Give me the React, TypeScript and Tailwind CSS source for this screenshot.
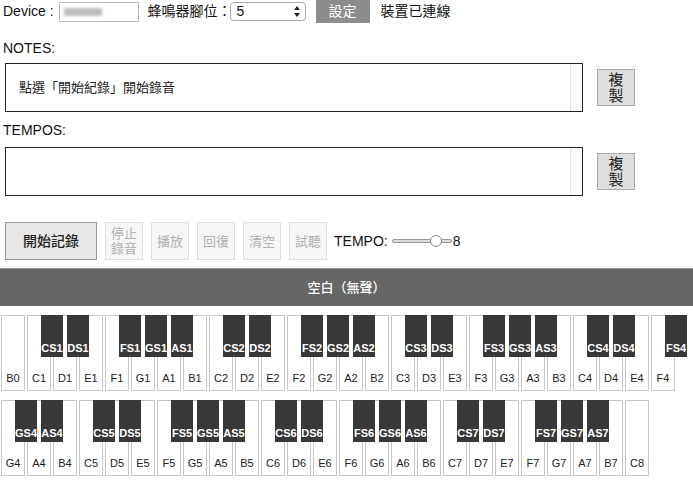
import React from "react";

const FONT = { fontFamily: '"Liberation Sans", "Noto Sans CJK TC", sans-serif' };

const ORDER = ["C", "D", "E", "F", "G", "A", "B"];
const SHARP = new Set(["C", "D", "F", "G", "A"]);

function buildKeys() {
  const keys: { name: string; sharp?: string }[] = [{ name: "B0" }];
  for (let o = 1; o <= 7; o++) {
    for (const n of ORDER) {
      keys.push({ name: `${n}${o}`, sharp: SHARP.has(n) ? `${n}S${o}` : undefined });
    }
  }
  keys.push({ name: "C8" });
  return keys;
}

function CopyButton() {
  return (
    <button
      type="button"
      className="w-[38px] h-[37px] border border-[#aaa] bg-[#dedede] text-[15px] leading-[16px] text-[#222] flex flex-col items-center justify-center"
    >
      <span>複</span>
      <span>製</span>
    </button>
  );
}

function TextBox({ text }: { text?: string }) {
  return (
    <div className="w-[578px] h-[49px] border border-[#222] bg-white flex">
      <div className="flex-1 flex items-center pl-[13px] text-[13px] text-[#222]">{text}</div>
      <div className="w-[12px] border-l border-[#e6e6e6] bg-[#fbfbfb]" />
    </div>
  );
}

function DisabledButton({ lines }: { lines: string[] }) {
  return (
    <button
      type="button"
      disabled
      className="w-[38px] h-[38px] border border-[#ddd] bg-[#f6f6f6] text-[13px] leading-[15px] text-[#b0b0b0] flex flex-col items-center justify-center"
    >
      {lines.map((l) => (
        <span key={l}>{l}</span>
      ))}
    </button>
  );
}

export default function App() {
  const keys = buildKeys();

  return (
    <div className="w-[693px] h-[482px] bg-white overflow-hidden text-[#111]" style={FONT}>
      <div className="h-[23px] flex items-center pl-[3px] text-[14px]">
        <span>Device :</span>
        <div className="ml-[5px] w-[80px] h-[20px] border border-[#bbb] bg-white flex items-center pl-[4px]">
          <div className="w-[38px] h-[8px] bg-[#bdbdbd] blur-[1.5px]" />
        </div>
        <span className="ml-[9px]">蜂鳴器腳位：</span>
        <div className="ml-[-2px] w-[76px] h-[19px] border border-[#aaa] rounded-[4px] bg-white flex items-center justify-between pl-[6px] pr-[5px]">
          <span className="text-[14px]">5</span>
          <svg width="6" height="11" viewBox="0 0 6 11">
            <path d="M3 0 L6 4 L0 4 Z" fill="#222" />
            <path d="M3 11 L6 7 L0 7 Z" fill="#222" />
          </svg>
        </div>
        <button type="button" className="ml-[10px] w-[54px] h-[23px] bg-[#8c8c8c] text-white text-[14px]">
          設定
        </button>
        <span className="ml-[11px]">裝置已連線</span>
      </div>

      <div className="mt-[17px] pl-[3px] text-[14px] leading-[17px]">NOTES:</div>
      <div className="mt-[6px] pl-[5px] flex items-center gap-[14px]">
        <TextBox text="點選「開始紀錄」開始錄音" />
        <CopyButton />
      </div>

      <div className="mt-[10px] pl-[3px] text-[14px] leading-[17px]">TEMPOS:</div>
      <div className="mt-[8px] pl-[5px] flex items-center gap-[14px]">
        <TextBox />
        <CopyButton />
      </div>

      <div className="mt-[26px] pl-[5px] h-[38px] flex items-center gap-[8px]">
        <button
          type="button"
          className="w-[92px] h-[38px] border border-[#999] bg-[#e8e8e8] text-[14px] font-medium text-[#222]"
        >
          開始記錄
        </button>
        <DisabledButton lines={["停止", "錄音"]} />
        <DisabledButton lines={["播放"]} />
        <DisabledButton lines={["回復"]} />
        <DisabledButton lines={["清空"]} />
        <DisabledButton lines={["試聽"]} />
        <span className="ml-[-1px] text-[14px]">TEMPO:</span>
        <div className="ml-[-4px] flex items-center">
          <div className="relative w-[60px] h-[4px] rounded-full border border-[#999] bg-[#ddd]">
            <div className="absolute left-[37px] top-[-5px] w-[12px] h-[12px] rounded-full border border-[#888] bg-white" />
          </div>
          <span className="ml-[1px] text-[14px]">8</span>
        </div>
      </div>

      <div className="mt-[8px] h-[38px] bg-[#666] border-t border-[#999] flex items-center justify-center text-white text-[13px] font-medium">
        空白（無聲）
      </div>

      <div className="mt-[9px] flex flex-wrap gap-y-[9px]">
        {keys.map((k) => (
          <div
            key={k.name}
            className="relative mx-[1px] w-[24px] h-[76px] border border-[#c8c8c8] bg-white flex items-end justify-center pb-[4px] text-[11px] text-[#222]"
          >
            {k.name}
            {k.sharp && (
              <div className="absolute z-10 top-[-1px] left-[13px] w-[22px] h-[42px] bg-[#383838] flex items-end justify-center pb-[1px] text-[11px] font-bold text-white">
                {k.sharp}
              </div>
            )}
          </div>
        ))}
      </div>
    </div>
  );
}
